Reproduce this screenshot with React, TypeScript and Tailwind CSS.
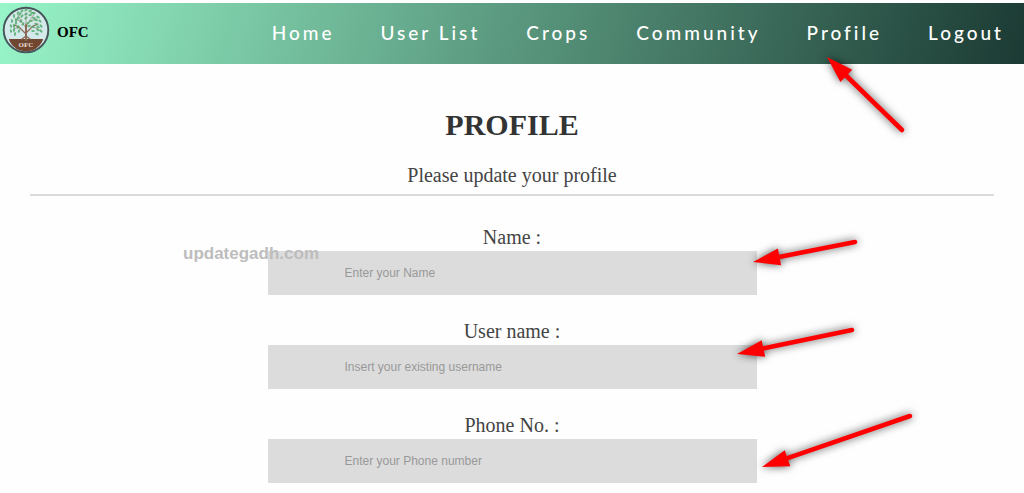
import React from 'react';

const navList = [
  { title: 'Home', url: '#home' },
  { title: 'User List', url: '#users' },
  { title: 'Crops', url: '#crops' },
  { title: 'Community', url: '#community' },
  { title: 'Profile', url: '#profile' },
  { title: 'Logout', url: '#logout' },
];

const fields = [
  { id: 'name', label: 'Name :', placeholder: 'Enter your Name' },
  {
    id: 'username',
    label: 'User name :',
    placeholder: 'Insert your existing username',
  },
  {
    id: 'phone',
    label: 'Phone No. :',
    placeholder: 'Enter your Phone number',
  },
];

// tip and tail of every pointer arrow
const arrows = [
  { tip: [827, 57], tail: [902, 130] },
  { tip: [753, 262], tail: [855, 242] },
  { tip: [737, 354], tail: [852, 330] },
  { tip: [762, 467], tail: [910, 416] },
];

const leaves = [
  [26, 10], [22, 11], [30, 11], [18, 13], [34, 13], [26, 14], [14, 16],
  [22, 16], [30, 15], [38, 17], [18, 18], [34, 18], [26, 18], [12, 21],
  [21, 21], [31, 21], [40, 21], [16, 23], [36, 24], [23, 24], [11, 26],
  [18, 27], [33, 27], [41, 26], [14, 30], [38, 30], [19, 31], [33, 31],
  [28, 23], [16, 20], [36, 20], [29, 26], [11, 31], [41, 31], [15, 34],
  [37, 34], [20, 14], [32, 13], [14, 26], [38, 27],
];

function Logo() {
  return (
    <svg className="h-12 w-12 shrink-0" viewBox="2 6 48 48" aria-hidden="true">
      <circle cx="26" cy="30" r="22.3" fill="#d3e9ea" stroke="#46565b" strokeWidth="1.9" />
      <path d="M9 39H43C42.5 43 39 46 36 48.5C30 52 22 52 16 48.5C13 46 9.5 43 9 39Z" fill="#704630" />
      <g fill="none" stroke="#8d6b58" strokeLinecap="round">
        <path d="M26 40V25" strokeWidth="2" />
        <path d="M26 34L19 27L14 25M26 33L33 26L38 24" strokeWidth="1.2" />
        <path
          d="M26 28L21 21L18 15M26 27L30 20L34 14M26 25V13M19 27L14 29M33 27L38 29M22 22L15 19M30 21L37 19"
          strokeWidth="0.6"
        />
        <path d="M22 39L26 36L30 39" strokeWidth="1.4" />
      </g>
      {leaves.map(([x, y]) => (
        <ellipse
          key={`${x}-${y}`}
          cx={x}
          cy={y}
          rx="1.9"
          ry="1.1"
          fill="#4fa866"
          opacity="0.8"
          transform={`rotate(${(x - 26) * 5 - 30} ${x} ${y})`}
        />
      ))}
      <text
        x="26"
        y="47"
        textAnchor="middle"
        fill="#eadfda"
        className="font-['Liberation_Serif',serif] text-[7px] font-bold"
      >
        OFC
      </text>
    </svg>
  );
}

function Header() {
  return (
    <header className="mt-[3px] flex h-[61px] items-center justify-between bg-[linear-gradient(105deg,#98f5c9,#1b3a33)] pr-5 pl-0.5">
      <a href="#home" className="flex items-center gap-[7px] pb-2">
        <Logo />
        <span className="pt-1.5 font-['Liberation_Serif',serif] text-[15px] font-bold text-black">
          OFC
        </span>
      </a>
      <nav>
        <ul className="flex items-center gap-[46px]">
          {navList.map(({ title, url }) => (
            <li key={title}>
              <a
                href={url}
                className="font-['Lato',sans-serif] text-[19px] font-medium tracking-[3px] whitespace-nowrap text-white"
              >
                {title}
              </a>
            </li>
          ))}
        </ul>
      </nav>
    </header>
  );
}

function Arrows() {
  return (
    <svg
      className="pointer-events-none absolute top-0 left-0 h-[493px] w-[1024px] drop-shadow-[0_0_4px_rgba(0,0,0,0.7)]"
      viewBox="0 0 1024 493"
      aria-hidden="true"
    >
      {arrows.map(({ tip, tail }) => {
        const dx = tail[0] - tip[0];
        const dy = tail[1] - tip[1];
        const length = Math.hypot(dx, dy);
        const angle = (Math.atan2(dy, dx) * 180) / Math.PI;
        return (
          <g
            key={tip.join()}
            transform={`translate(${tip[0]} ${tip[1]}) rotate(${angle})`}
            fill="#fe0000"
          >
            <path d="M0 0L27 -8.5V8.5Z" />
            <path d={`M24 0H${length}`} stroke="#fe0000" strokeWidth="4.6" strokeLinecap="round" />
          </g>
        );
      })}
    </svg>
  );
}

export default function App() {
  return (
    <div className="relative flow-root min-h-screen bg-[#fefefe] pb-2.5">
      <Header />
      <main className="px-[30px] pt-[39px] text-center font-['Liberation_Serif',serif] text-[#444]">
        <h1 className="text-[30px] leading-[44px] font-bold text-[#333]">PROFILE</h1>
        <p className="border-b-2 border-[#dbdbdb] pt-[13px] pb-1 text-xl leading-[30px]">
          Please update your profile
        </p>
        <form className="mx-auto mt-[27px] flex max-w-[489px] flex-col gap-[22px]">
          {fields.map(({ id, label, placeholder }) => (
            <div key={id} className="flex flex-col">
              <label htmlFor={id} className="text-xl leading-7">
                {label}
              </label>
              <input
                id={id}
                type="text"
                placeholder={placeholder}
                className="h-11 w-full bg-[#dcdcdc] px-[77px] font-['Liberation_Sans',sans-serif] text-xs placeholder:text-[#999]"
              />
            </div>
          ))}
        </form>
      </main>
      <span className="absolute top-[242px] left-[183px] font-['Liberation_Sans',sans-serif] text-[17px] leading-6 font-bold text-[#bdbdbd]">
        updategadh.com
      </span>
      <Arrows />
    </div>
  );
}
